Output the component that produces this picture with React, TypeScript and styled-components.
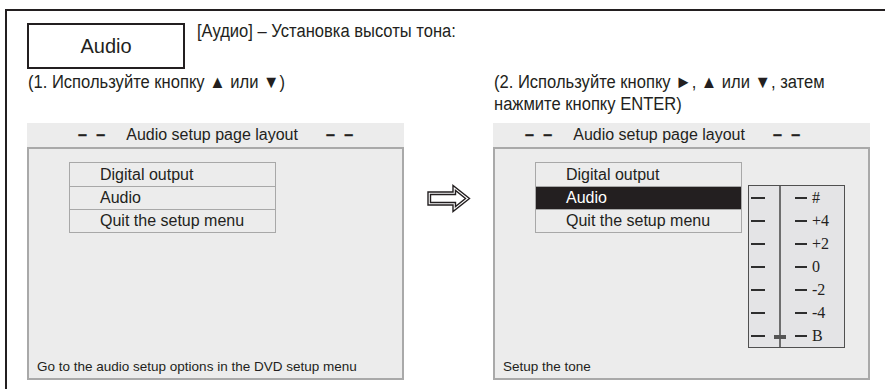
import styled, { createGlobalStyle } from 'styled-components'

const GlobalStyle = createGlobalStyle`
  html, body {
    margin: 0;
    background: #ffffff;
    color: #231f20;
  }
`

const sans = `'Liberation Sans', Arial, sans-serif`

const tones = ['#', '+4', '+2', '0', '-2', '-4', 'B']

const Arrow = () => (
  <svg width="44" height="29" viewBox="0 0 44 29" fill="none" stroke="#231f20" strokeWidth="1.4">
    <path d="M1 8 H26 V1.5 L42.5 14.5 L26 27.5 V21 H1 Z" />
    <path d="M3.5 10.5 H28.5 V6.5 L38.5 14.5 L28.5 22.5 V18.5 H3.5 Z" />
  </svg>
)

const Panel = ({ selected, footer, headerPad, scale }: {
  selected?: number
  footer: string
  headerPad: number
  scale?: boolean
}) => {
  const items = ['Digital output', 'Audio', 'Quit the setup menu']
  return (
    <PanelWrap>
      <Header $pad={headerPad}>
        <Dashes>– –</Dashes>
        <span>Audio setup page layout</span>
        <Dashes>– –</Dashes>
      </Header>
      <Screen>
        <ScreenBody>
          <Menu>
            {items.map((it, i) => (
              <MenuItem key={it} $active={i === selected}>{it}</MenuItem>
            ))}
          </Menu>
          {scale && (
            <Scale>
              {tones.map((t, i) => (
                <ScaleRow key={t}>
                  <ScaleLeft>
                    <Tick />
                    {i === tones.length - 1 && <Thumb />}
                  </ScaleLeft>
                  <ScaleRight>
                    <Tick $w={12} />
                    <ToneLabel>{t}</ToneLabel>
                  </ScaleRight>
                </ScaleRow>
              ))}
            </Scale>
          )}
        </ScreenBody>
        <Footer>{footer}</Footer>
      </Screen>
    </PanelWrap>
  )
}

const App = () => {
  return (
    <>
      <GlobalStyle />
      <Frame>
        <TopRow>
          <AudioBox>Audio</AudioBox>
          <Title>[Аудио] – Установка высоты тона:</Title>
        </TopRow>
        <Columns>
          <Step>
            <Narrow>(1. Используйте кнопку ▲ или ▼)</Narrow>
          </Step>
          <div />
          <Step>
            <Narrow>(2. Используйте кнопку ►, ▲ или ▼, затем</Narrow>
            <Narrow>нажмите кнопку ENTER)</Narrow>
          </Step>
          <Panel footer="Go to the audio setup options in the DVD setup menu" headerPad={51} />
          <ArrowCell>
            <Arrow />
          </ArrowCell>
          <Panel selected={1} footer="Setup the tone" headerPad={32} scale />
        </Columns>
      </Frame>
    </>
  )
}

export default App

const Frame = styled.div`
  margin: 9px 0 0 5px;
  height: calc(100vh - 9px);
  box-sizing: border-box;
  border-top: 2px solid #231f20;
  border-left: 2px solid #231f20;
  padding: 12px 0 0 20px;
`

const TopRow = styled.div`
  display: flex;
  align-items: flex-start;
  gap: 12px;
`

const AudioBox = styled.div`
  flex: none;
  width: 158px;
  height: 46px;
  box-sizing: border-box;
  border: 2px solid #231f20;
  display: flex;
  align-items: center;
  justify-content: center;
  font-family: ${sans};
  font-size: 20px;
`

const Narrow = styled.span`
  display: block;
  font-family: ${sans};
  font-size: 18px;
  line-height: 22px;
  white-space: nowrap;
  transform: scaleX(0.92);
  transform-origin: left center;
`

const Title = styled(Narrow)`
  margin-top: -3px;
`

const Columns = styled.div`
  margin-top: 2px;
  display: grid;
  grid-template-columns: 377px 89px 377px;
  grid-template-rows: 44px 257px;
  row-gap: 8px;
`

const Step = styled.div`
  padding-left: 1px;
`

const ArrowCell = styled.div`
  display: flex;
  justify-content: center;
  padding-top: 61px;
`

const PanelWrap = styled.div`
  display: flex;
  flex-direction: column;
`

const Header = styled.div<{ $pad: number }>`
  height: 24px;
  background: #ececec;
  display: flex;
  align-items: center;
  padding-left: ${p => p.$pad}px;
  gap: 21px;
  font-family: ${sans};
  font-size: 16px;
  & > span:last-child {
    margin-left: 7px;
  }
`

const Dashes = styled.span`
  font-weight: 700;
  white-space: pre;
  word-spacing: 5px;
  -webkit-text-stroke: 0.4px #231f20;
`

const Screen = styled.div`
  flex: 1;
  box-sizing: border-box;
  background: #ececec;
  border: 2px solid #a9a9a9;
  display: flex;
  flex-direction: column;
  padding: 13px 0 0 40px;
`

const ScreenBody = styled.div`
  display: flex;
  align-items: flex-start;
  gap: 6px;
`

const Menu = styled.div`
  width: 207px;
  border: 1px solid #a8a8a8;
  box-sizing: border-box;
`

const MenuItem = styled.div<{ $active?: boolean }>`
  height: 23px;
  box-sizing: border-box;
  padding-left: 30px;
  display: flex;
  align-items: center;
  font-family: ${sans};
  font-size: 16px;
  background: ${p => (p.$active ? '#231f20' : 'transparent')};
  color: ${p => (p.$active ? '#ffffff' : '#231f20')};
  & + & {
    border-top: 1px solid #a8a8a8;
  }
`

const Scale = styled.div`
  margin-top: 23px;
  width: 97px;
  box-sizing: border-box;
  border: 1px solid #505050;
  background: #e4e4e6;
`

const ScaleRow = styled.div`
  display: grid;
  grid-template-columns: 32px 1fr;
  height: 23px;
`

const ScaleLeft = styled.div`
  position: relative;
  display: flex;
  align-items: center;
  padding-left: 2px;
  border-right: 2px solid #6e6e6e;
`

const ScaleRight = styled.div`
  display: flex;
  align-items: center;
  padding-left: 14px;
  gap: 5px;
`

const Tick = styled.span<{ $w?: number }>`
  width: ${p => p.$w ?? 14}px;
  height: 2px;
  background: #2e2e2e;
`

const Thumb = styled.span`
  position: absolute;
  right: -7px;
  top: 50%;
  width: 12px;
  height: 4px;
  margin-top: -1px;
  background: #555555;
`

const ToneLabel = styled.span`
  font-family: 'Liberation Serif', 'Times New Roman', serif;
  font-size: 16px;
`

const Footer = styled.div`
  margin-top: auto;
  margin-left: -32px;
  padding-bottom: 4px;
  font-family: ${sans};
  font-size: 13.5px;
`
